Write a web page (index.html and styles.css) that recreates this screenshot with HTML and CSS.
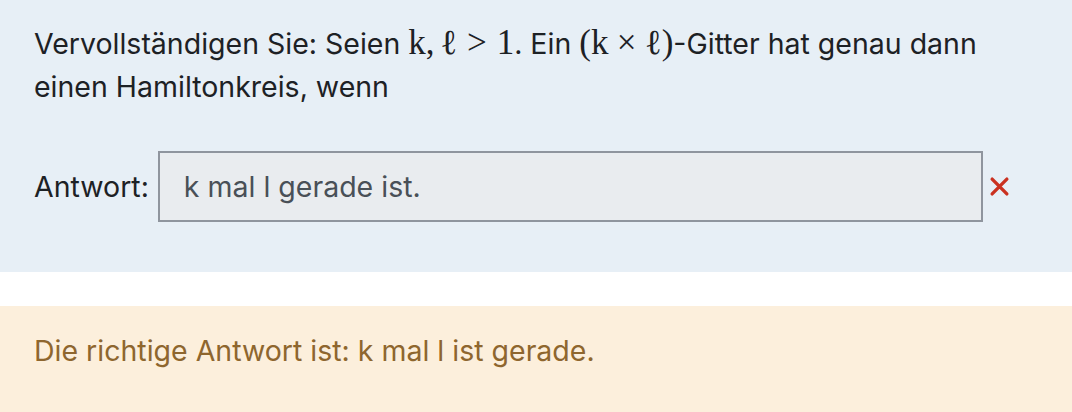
FILE: index.html
```html
<!DOCTYPE html>
<html lang="de">
<head>
<meta charset="utf-8">
<link rel="stylesheet" href="styles.css">
</head>
<body>
<div class="que">
  <p class="qtext">Vervollständigen Sie: Seien <span class="m">k,<span class="thin"></span>ℓ<span class="rel">&gt;</span>1</span>. Ein <span class="m">(k<span class="bin">×</span>ℓ)</span>-Gitter hat genau dann einen Hamiltonkreis, wenn</p>
  <div class="answer">
    <label class="lbl">Antwort:</label>
    <div class="input">k mal l gerade ist.</div>
    <svg class="icon" viewBox="0 0 20 20" width="21" height="21"><path d="M3 3 L17 17 M17 3 L3 17" stroke="#ca3120" stroke-width="3.2" stroke-linecap="round"/></svg>
  </div>
</div>
<div class="feedback">Die richtige Antwort ist: k mal l ist gerade.</div>
</body>
</html>
```
FILE: styles.css
```css
html, body { margin: 0; padding: 0; background: #fff; }
body { font-family: Inter, "Noto Sans", sans-serif; color: #1d2125; }
.que {
  background: #e7eff6;
  padding: 22px 34px 50px 34px;
}
.qtext {
  margin: 0;
  font-size: 28.5px;
  line-height: 43px;
  max-width: 990px;
}
.m { font-family: "Liberation Serif", "DejaVu Serif", serif; font-size: 35px; line-height: 1; }
.thin { display: inline-block; width: 0.17em; }
.rel { display: inline-block; margin: 0 0.28em; }
.bin { display: inline-block; margin: 0 0.24em; }
.answer {
  display: flex;
  align-items: center;
  margin-top: 43px;
}
.lbl { font-size: 28.5px; margin-right: 9px; }
.input {
  box-sizing: border-box;
  width: 825px;
  height: 71px;
  border: 2px solid #8f959e;
  background: #e9ecef;
  color: #495057;
  font-size: 28.5px;
  padding: 0 24px;
  display: flex;
  align-items: center;
}
.icon { margin-left: 6px; }
.feedback {
  margin-top: 34px;
  background: #fcefdc;
  color: #8e662e;
  font-size: 28.5px;
  padding: 25px 34px 42px;
  line-height: 40px;
}
```
